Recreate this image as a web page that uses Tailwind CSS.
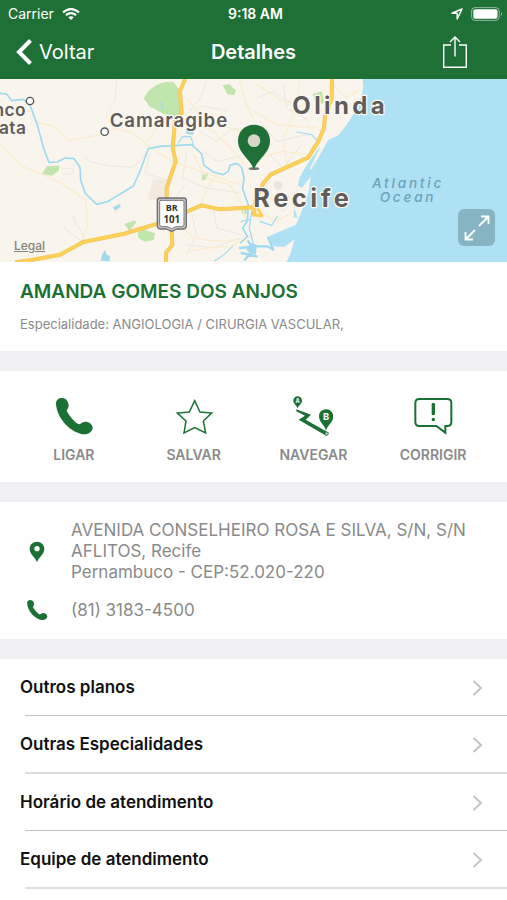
<!DOCTYPE html>
<html lang="pt-BR">
<head>
  <meta charset="UTF-8" />
  <meta name="viewport" content="width=device-width, initial-scale=1" />
  <title>Detalhes</title>
  <script src="https://cdn.jsdelivr.net/npm/@tailwindcss/browser@4"></script>
</head>
<body class="min-h-screen bg-white font-['Inter',sans-serif] text-[#8a8a8a]">

  <!-- Header -->
  <header class="bg-[#1f7037] text-white">
    <div class="grid grid-cols-3 items-center h-7 pl-2 pr-1 text-sm">
      <div class="flex items-center gap-2">
        <span>Carrier</span>
        <svg class="w-[18px] h-3" viewBox="0 0 18 12" fill="none" stroke="currentColor" stroke-width="2.2">
          <path d="M1 4.300Q9-2.300 17 4.300" />
          <path d="M3.900 7.200Q9 3.200 14.100 7.200" />
          <path d="M6.300 9.200Q9 7.200 11.700 9.200L9 12Z" fill="currentColor" stroke="none" />
        </svg>
      </div>
      <span class="text-center font-semibold">9:18 AM</span>
      <div class="flex items-center justify-end gap-2">
        <svg class="w-3 h-3" viewBox="0 0 12 12" fill="none" stroke="currentColor" stroke-width="1.500" stroke-linejoin="round">
          <path d="M11 1L1 5.200H6.200V11Z" />
        </svg>
        <svg class="w-8 h-[14px]" viewBox="0 0 32 14">
          <rect x=".6" y=".6" width="27.600" height="12.800" rx="3.500" fill="none" stroke="#fff" stroke-opacity=".5" />
          <rect x="2.300" y="2.300" width="24.200" height="9.400" rx="2" fill="#fff" />
          <path d="M30 5q2 2 0 4z" fill="#fff" fill-opacity=".6" />
        </svg>
      </div>
    </div>
    <div class="grid grid-cols-[1fr_auto_1fr] items-center h-[51px] pb-1 pl-4 pr-10 text-xl">
      <a href="#" class="flex items-center gap-[7px]">
        <svg class="w-4 h-[26px]" viewBox="0 0 16 26" fill="none" stroke="currentColor" stroke-width="4">
          <path d="M14.500 1.500L3 13L14.500 24.500" />
        </svg>
        Voltar
      </a>
      <h1 class="pl-6 font-semibold">Detalhes</h1>
      <button class="justify-self-end" aria-label="Compartilhar">
        <svg class="w-6 h-8" viewBox="0 0 24 32" fill="none" stroke="currentColor" stroke-width="1.400">
          <path d="M8 9H.7V31.300H23.300V9H16M12 20.500V1.300M7 6L12 1L17 6" />
        </svg>
      </button>
    </div>
  </header>

  <!-- Map -->
  <section class="relative h-[183px] overflow-hidden bg-[#aee1f4]">
    <svg class="block w-full h-full" viewBox="0 3 1521 549" preserveAspectRatio="xMidYMid slice" fill="none" stroke-linecap="round" stroke-linejoin="round">
      <!-- land -->
      <path d="M0 0H1088L1090 28L1082 62L1068 96L1040 140L1015 172L985 186L970 212L948 252L936 284L930 310L925 345L905 400L888 440L845 458L800 478L822 505L852 507L884 484L872 525L858 556H0Z" fill="#f9f5ed" />
      <path d="M960 205L922 258L900 296L893 322L905 330L934 294L944 258Z" fill="#aee1f4" />
      <path d="M956 222L932 272" stroke="#f9f5ed" stroke-width="5" />
      <path d="M884 390L892 420L880 418Z" fill="#aee1f4" />
      <!-- parks -->
      <g fill="#c0e5ad">
        <path d="M432 62C445 30 480 8 520 12L538 35L542 110L515 116C490 110 470 95 450 87Z" />
        <path d="M668 22L688 18L708 38L702 52L682 48Z" />
        <path d="M126 288L140 265L178 263L176 278L155 293Z" />
        <path d="M413 462L432 455L465 466L462 485L435 491L415 480Z" />
        <path d="M373 438L405 427L408 435L388 458Z" />
        <path d="M608 288L625 283L620 303L605 308Z" />
        <path d="M938 48L966 40L972 75L948 78Z" />
        <path d="M724 392L742 398L738 410L726 406Z" />
      </g>
      <path d="M458 304L498 304L492 370L444 364Z" fill="#f4e9df" />
      <circle cx="834" cy="322" r="13" fill="#e9e6e2" />
      <!-- minor roads -->
      <g stroke="#e8e4dd" stroke-width="2.500">
        <path d="M255 236L270 250L330 264L400 268L425 245L445 215M350 6L345 70L330 90M620 10L600 60L570 98L610 84L680 98M185 275Q205 262 222 280Q210 295 185 285M215 412L250 470L245 490L190 448M225 412L222 440" />
        <path d="M560 225L548 300L620 330L720 345M555 320L530 355M450 225L435 285L510 310M560 500L640 510L720 480M575 410L590 470L560 530M640 390L650 450L720 470" />
        <path d="M770 60L820 40L900 90M780 130L830 190L920 170M800 220L850 270L905 200M850 20L860 90L930 130M780 300L850 400L900 350M600 160L650 190L700 150L755 160M610 220L650 250L720 235" />
      </g>
      <g stroke="#fbecce" stroke-width="4">
        <path d="M0 195L60 262L130 290L190 320L258 365L262 440L250 490" />
        <path d="M110 132L160 145L205 188L300 170L350 152L400 165L450 208L520 250L600 280L720 320" />
        <path d="M440 195L470 150L505 120M560 60L600 110L660 140L745 170M545 120L640 160L700 220L735 260M720 10L735 70L760 120M580 230L620 300L690 320L725 380L740 430M600 380L620 330L650 290" />
        <path d="M770 20L850 70L960 100L1030 90M760 100L830 140L950 150M770 240L850 220L930 230M900 10L880 110L850 180L860 260M1000 20L1040 60L1070 40M780 370L840 350L900 370M775 400L830 430L880 400M530 425L580 480L650 490L720 485M560 520L620 510L690 505L760 470" />
      </g>
      <!-- rivers -->
      <g stroke="#9fdaf1" stroke-width="5">
        <path d="M0 46L20 48L35 68L70 64L90 82L112 140L132 215L147 253L172 252L195 240L222 242L240 268L242 305L255 345L290 379L325 370L400 324L420 280L445 212L480 205L575 200" />
        <path d="M575 200L605 228L612 262L640 282L670 290L685 280L690 262L710 256L725 268L732 300L728 332L745 380L742 430L728 450L742 475L722 495" />
        <path d="M535 195L548 175L572 176L580 200M480 72L490 95M755 400L748 450L760 500" stroke-width="3.500" />
        <path d="M890 162L935 170L950 186M645 548L672 530L698 505M780 430L815 442L832 415M724 430L748 425" stroke-width="3.500" />
        <path d="M720 510L760 505L802 505L820 515L805 480" stroke-width="7" />
        <path d="M745 490L760 515L735 545M725 525L770 535" stroke-width="7" />
      </g>
      <g fill="#9fdaf1">
        <path d="M338 388L360 378L362 386L346 398Z" />
        <path d="M302 548L306 530L315 515L320 530L330 534L328 550Z" />
        <path d="M556 150L582 158L580 170L560 168Z" />
        <path d="M738 515L755 495L770 500L768 530L750 525Z" />
      </g>
      <!-- highways -->
      <g stroke="#f0c05c" stroke-width="12">
        <path d="M555 4L540 40L545 105L525 130L518 210L527 250L500 330V400M514 440L517 500L498 525V556M50 552L95 546L180 530L250 492L370 468L470 438M555 403L605 382L660 394L762 388" />
        <path d="M996 0L995 60L975 115L972 150L955 190L925 238L812 290L790 315L765 370L762 410" />
      </g>
      <g stroke="#fdd058" stroke-width="9">
        <path d="M555 4L540 40L545 105L525 130L518 210L527 250L500 330V400M514 440L517 500L498 525V556M50 552L95 546L180 530L250 492L370 468L470 438M555 403L605 382L660 394L762 388" />
        <path d="M996 0L995 60L975 115L972 150L955 190L925 238L812 290L790 315L765 370L762 410L786 414L775 394" />
      </g>
      <!-- BR 101 shield -->
      <path d="M480 360H551Q559 360 559 368V443Q559 452 550 453H531L515 460L499 453H481Q472 452 472 443V368Q472 360 480 360Z" fill="#c9c9c9" stroke="#6f6f6f" stroke-width="4" />
      <path d="M482 367H549Q552 367 552 371V439Q552 445 546 446H529L515 452L501 446H485Q479 445 479 439V371Q479 367 482 367Z" fill="#fff" stroke="#777" stroke-width="3" />
      <g fill="#333" font-family="'Open Sans', sans-serif" font-weight="700" text-anchor="middle">
        <text x="515" y="399" font-size="27">BR</text>
        <text x="515" y="434" font-size="29">101</text>
      </g>
      <!-- place labels -->
      <g fill="#fff" stroke="#555" stroke-width="4">
        <circle cx="90" cy="69" r="11" />
        <circle cx="314" cy="161" r="11" />
      </g>
      <g fill="#5f5c5a" stroke="#fbf8f2" stroke-width="7" paint-order="stroke" font-family="Inter, sans-serif" font-weight="600">
        <text x="78" y="115" font-size="52" text-anchor="end" class="tracking-wide">nco</text>
        <text x="79" y="169" font-size="52" text-anchor="end" class="tracking-wide">ata</text>
        <text x="329" y="146" font-size="56" class="tracking-wider">Camaragibe</text>
        <text x="877" y="107" font-size="72" font-weight="700" class="tracking-[0.14em]">Olinda</text>
        <text x="760" y="387" font-size="76" font-weight="700" class="tracking-[0.14em]">Recife</text>
      </g>
      <g fill="#6ba3ba" font-family="Inter, sans-serif" font-size="41" font-style="italic" font-weight="500">
        <text x="1116" y="329" class="tracking-[0.2em]">Atlantic</text>
        <text x="1139" y="372" class="tracking-[0.2em]">Ocean</text>
      </g>
      <!-- location pin -->
      <ellipse cx="762" cy="272" rx="16" ry="4" fill="#777" />
      <path d="M762 274C750 242 714 225 714 188C714 160 735 140 762 140C789 140 810 160 810 188C810 225 774 242 762 274Z" fill="#1f7037" />
      <circle cx="762" cy="188" r="19" fill="#d8d6c7" />
    </svg>
    <a href="#" class="absolute left-3.5 bottom-2 text-xs font-medium text-[#85827c] underline">Legal</a>
    <button class="absolute right-3 bottom-4 flex h-[37px] w-[37px] items-center justify-center rounded-md bg-[#87b4c3] text-white" aria-label="Expandir mapa">
      <svg class="w-[26px] h-[26px]" viewBox="0 0 26 26" fill="none" stroke="currentColor" stroke-width="1.800">
        <path d="M15 11L24.500 1.500M17 1.500H24.500V9M11 15L1.500 24.500M1.500 17V24.500H9" />
      </svg>
    </button>
  </section>

  <main class="flex flex-col gap-5 bg-[#efeff4]">
    <!-- Name -->
    <section class="bg-white px-5 pt-[18px] pb-[17px]">
      <h2 class="text-[19px] leading-6 font-semibold text-[#1b7034]">AMANDA GOMES DOS ANJOS</h2>
      <p class="mt-2.5 text-[13px] leading-5">Especialidade: ANGIOLOGIA / CIRURGIA VASCULAR,</p>
    </section>

    <!-- Actions -->
    <section class="grid grid-cols-4 bg-white px-3.5 pt-[25px] pb-[17px] text-sm leading-5 font-semibold">
      <button class="flex flex-col items-center gap-[9px]">
        <svg class="w-10 h-10" viewBox="162 77 120 120" fill="#1b7034">
          <path d="M168 100C168 88 178 82 187 83C199 84 206 95 206 106C206 113 201 116 200 121C206 134 222 154 236 162C241 163 246 154 256 154C267 154 278 162 278 173C277 184 266 192 254 192C215 190 170 145 168 100Z" />
        </svg>
        LIGAR
      </button>
      <button class="flex flex-col items-center gap-[9px]">
        <svg class="w-10 h-10" viewBox="522 77 120 120" fill="none" stroke="#1b7034" stroke-width="4.500">
          <path d="M584 91L600 125L635 128L610 152L617 188L584 172L552 188L558 152L532 128L568 125Z" />
        </svg>
        SALVAR
      </button>
      <button class="flex flex-col items-center gap-[9px]">
        <svg class="w-10 h-10" viewBox="121 77 120 120" fill="#1b7034">
          <path d="M131 117L175 133L159 148L228 187L222 197L138 148L157 136L131 123Z" />
          <path d="M135 115C133 105 122 101 122 91C122 83 128 78 135 78C142 78 148 83 148 91C148 101 137 105 135 115Z" />
          <path d="M220 181C216 164 199 156 199 138C199 126 208 117 220 117C232 117 242 126 242 138C242 156 224 164 220 181Z" />
          <circle cx="222" cy="190" r="5" fill="#b9cfbf" stroke="#1b7034" stroke-width="2" />
          <g fill="#fff" font-family="Inter, sans-serif" font-weight="700" text-anchor="middle">
            <text x="135" y="98" font-size="17">A</text>
            <text x="220" y="149" font-size="28">B</text>
          </g>
        </svg>
        NAVEGAR
      </button>
      <button class="flex flex-col items-center gap-[9px]">
        <svg class="w-10 h-10" viewBox="481 77 120 120" fill="none" stroke="#1b7034" stroke-width="6" stroke-linecap="round">
          <path d="M500 86H584Q596 86 596 98V155Q596 167 584 167H578V187L551 167H500Q488 167 488 155V98Q488 86 500 86Z" />
          <path d="M542 102V130" stroke-width="10" />
          <path d="M542 147V147.500" stroke-width="10" />
        </svg>
        CORRIGIR
      </button>
    </section>

    <!-- Address and phone -->
    <section class="grid grid-cols-[34px_1fr] items-center gap-x-[17px] gap-y-4 bg-white pt-[18px] pb-[18px] pl-5 pr-5 text-[17px] leading-[21px]">
      <svg class="w-[34px] h-[22px]" viewBox="60 118 102 66" fill="#1b7034">
        <path fill-rule="evenodd" d="M111 182C106 166 89 158 89 141C89 129 99 120 111 120C123 120 133 129 133 141C133 158 116 166 111 182ZM111 133A8 8 0 1 0 111 149A8 8 0 1 0 111 133Z" />
      </svg>
      <address class="not-italic">
        AVENIDA CONSELHEIRO ROSA E SILVA, S/N, S/N<br />
        AFLITOS, Recife<br />
        Pernambuco - CEP:52.020-220
      </address>
      <svg class="w-[34px] h-[22px]" viewBox="162 77 120 120" fill="#1b7034">
        <path d="M168 100C168 88 178 82 187 83C199 84 206 95 206 106C206 113 201 116 200 121C206 134 222 154 236 162C241 163 246 154 256 154C267 154 278 162 278 173C277 184 266 192 254 192C215 190 170 145 168 100Z" />
      </svg>
      <a href="tel:8131834500">(81) 3183-4500</a>
    </section>

    <!-- More -->
    <nav class="bg-white text-[17px] font-semibold text-[#111]">
      <a href="#" class="block">
        <div class="flex h-14 items-center justify-between pt-0.5 pl-5 pr-6">
          Outros planos
          <svg class="w-[11px] h-4" viewBox="0 0 11 16" fill="none" stroke="#c4c4c6" stroke-width="2"><path d="M1.500 1L9 8L1.500 15" /></svg>
        </div>
        <div class="ml-[25px] h-px bg-[#c3c3c5]"></div>
      </a>
      <a href="#" class="block">
        <div class="flex h-14 items-center justify-between pt-0.5 pl-5 pr-6">
          Outras Especialidades
          <svg class="w-[11px] h-4" viewBox="0 0 11 16" fill="none" stroke="#c4c4c6" stroke-width="2"><path d="M1.500 1L9 8L1.500 15" /></svg>
        </div>
        <div class="ml-[25px] h-0.5 bg-[#dedee0]"></div>
      </a>
      <a href="#" class="block">
        <div class="flex h-14 items-center justify-between pt-0.5 pl-5 pr-6">
          Horário de atendimento
          <svg class="w-[11px] h-4" viewBox="0 0 11 16" fill="none" stroke="#c4c4c6" stroke-width="2"><path d="M1.500 1L9 8L1.500 15" /></svg>
        </div>
        <div class="ml-[25px] h-px bg-[#c3c3c5]"></div>
      </a>
      <a href="#" class="block">
        <div class="flex h-14 items-center justify-between pt-0.5 pl-5 pr-6">
          Equipe de atendimento
          <svg class="w-[11px] h-4" viewBox="0 0 11 16" fill="none" stroke="#c4c4c6" stroke-width="2"><path d="M1.500 1L9 8L1.500 15" /></svg>
        </div>
        <div class="ml-[25px] h-0.5 bg-[#dedee0]"></div>
      </a>
    </nav>
  </main>

</body>
</html>
